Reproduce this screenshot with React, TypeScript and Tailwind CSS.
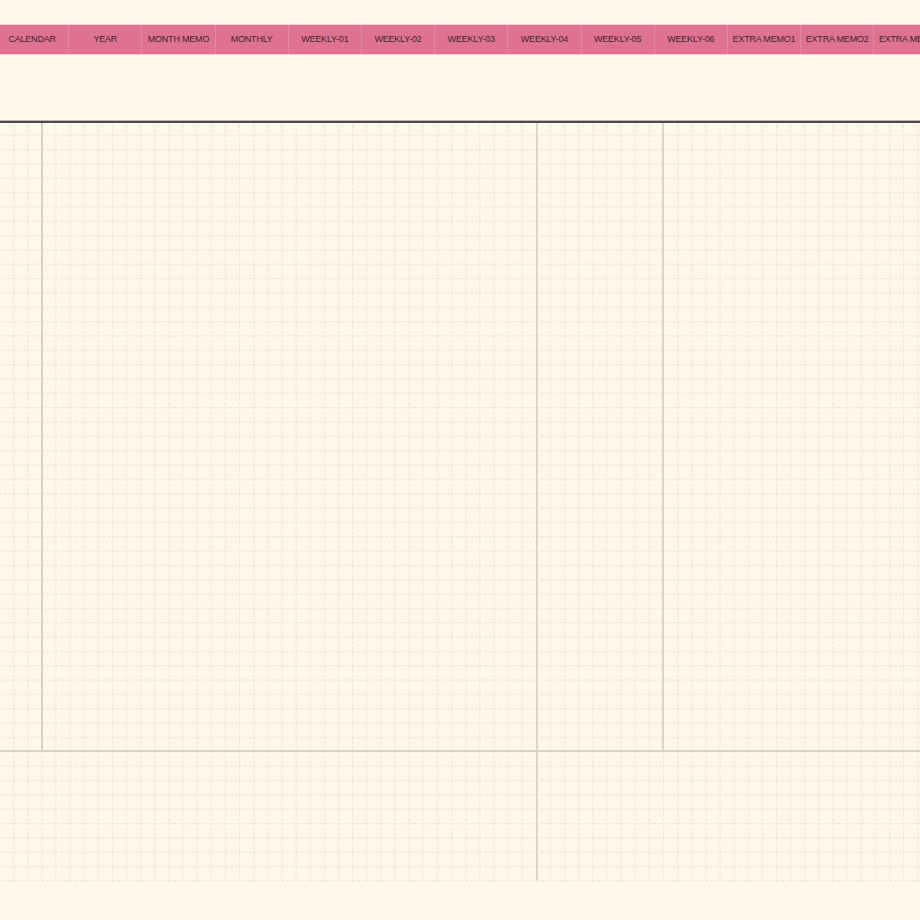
const tabs = [
  'CALENDAR',
  'YEAR',
  'MONTH MEMO',
  'MONTHLY',
  'WEEKLY-01',
  'WEEKLY-02',
  'WEEKLY-03',
  'WEEKLY-04',
  'WEEKLY-05',
  'WEEKLY-06',
  'EXTRA MEMO1',
  'EXTRA MEMO2',
  'EXTRA MEMO3',
]

// dashed paper grid, sits under the page sections
function PaperGrid() {
  return (
    <svg className="absolute inset-0 h-full w-full" aria-hidden>
      <defs>
        <pattern id="paper" x="12.9" y="11.5" width="14.13" height="14.34" patternUnits="userSpaceOnUse">
          <line x1="0.5" y1="0" x2="0.5" y2="14.34" stroke="#eee3d5" strokeWidth="1.2" strokeDasharray="3 2" />
          <line x1="0" y1="0.5" x2="14.13" y2="0.5" stroke="#eee3d5" strokeWidth="1.2" strokeDasharray="3 2" />
        </pattern>
      </defs>
      <rect width="100%" height="100%" fill="url(#paper)" />
    </svg>
  )
}

export default function App() {
  return (
    <div className="w-[920px] h-[920px] overflow-hidden bg-[#fef7ec] font-['Liberation_Sans',Arial,sans-serif]">
      <div className="h-[24px]" />

      <nav className="flex h-[31px] -ml-[4px] border-y border-[#f3cbd4] bg-[#df7291] overflow-hidden">
        {tabs.map((t) => (
          <div
            key={t}
            className="flex w-[73.2px] shrink-0 items-center justify-center border-r border-[#e08aa2] text-[9px] tracking-[-0.2px] text-[#3e2530] whitespace-nowrap"
          >
            {t}
          </div>
        ))}
      </nav>

      <div className="h-[65px]" />

      <div className="h-px bg-[#b9b4ad]" />
      <div className="h-[2px] bg-[#4b4b4b]" />

      <div className="relative h-[759px]">
        <PaperGrid />
        <div className="relative flex h-[629px] border-b-2 border-[#d8d1c8]">
          <div className="w-[43px] border-r-2 border-[#d8d1c8]" />
          <div className="w-[495px] border-r-2 border-[#dcd5cc]" />
          <div className="w-[126px] border-r-2 border-[#dcd5cc]" />
          <div className="flex-1" />
        </div>
        <div className="relative flex h-[128px]">
          <div className="w-[538px] border-r-2 border-[#dcd5cc]" />
          <div className="flex-1" />
        </div>
      </div>
    </div>
  )
}
